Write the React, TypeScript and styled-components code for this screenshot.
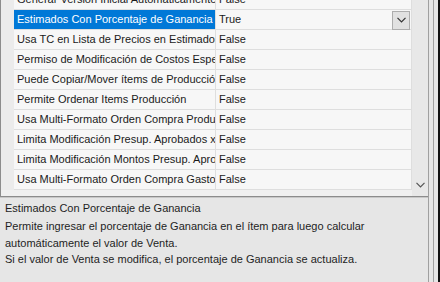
import React from "react";
import styled, { createGlobalStyle } from "styled-components";

const Global = createGlobalStyle`
  html, body { margin: 0; padding: 0; background: #e6e6e6; overflow: hidden; }
  * { box-sizing: border-box; }
`;

const Frame = styled.div`
  width: 440px;
  height: 282px;
  display: flex;
  font-family: "Liberation Sans", Arial, sans-serif;
  font-size: 11px;
  color: #1e1e1e;
  background: #e6e6e6;
`;

const Main = styled.div`
  width: 429px;
  display: flex;
  flex-direction: column;
  border-right: 1px solid #a0a0a0;
`;

const Grid = styled.div`
  height: 197px;
  display: flex;
  border-left: 1px solid #8c8c8c;
  border-bottom: 1px solid #8c8c8c;
  background: #f0f0f0;
`;

const Viewport = styled.div`
  flex: 1;
  overflow: hidden;
  display: flex;
  flex-direction: column;
`;

const Rows = styled.div`
  margin-top: -10px;
  display: flex;
  flex-direction: column;
`;

const Row = styled.div`
  height: 20px;
  display: grid;
  grid-template-columns: 13px 202px 1fr;
  background: #f0f0f0;
`;

const Gutter = styled.div`
  background: #ebebeb;
`;

const NameCell = styled.div<{ $selected?: boolean }>`
  padding-left: 3px;
  line-height: 19px;
  white-space: nowrap;
  overflow: hidden;
  text-overflow: clip;
  border-bottom: 1px solid #dedede;
  border-right: 1px solid #dedede;
  background: ${(p) => (p.$selected ? "#0078d7" : "#f7f7f7")};
  color: ${(p) => (p.$selected ? "#ffffff" : "#1a1a1a")};
`;

const ValueCell = styled.div`
  display: flex;
  align-items: center;
  justify-content: space-between;
  padding-left: 3px;
  padding-right: 1px;
  height: 20px;
  border-bottom: 1px solid #dedede;
  background: #f7f7f7;
  border-right: 1px solid #dedede;
  color: #1a1a1a;
`;

const ValueText = styled.span`
  line-height: 19px;
`;

const DropButton = styled.div`
  width: 18px;
  height: 19px;
  margin-top: 1px;
  border: 1px solid #adadad;
  background: #e1e1e1;
  display: flex;
  align-items: center;
  justify-content: center;
`;

const ScrollBar = styled.div`
  width: 16px;
  background: #e8e8e8;
  display: flex;
  flex-direction: column;
  justify-content: flex-end;
  align-items: center;
  padding-bottom: 8px;
`;

const Description = styled.div`
  flex: 1;
  padding: 2px 5px;
  background: #e6e6e6;
  border-top: 1px solid #c8c8c8;
`;

const DescTitle = styled.div`
  line-height: 17px;
  margin-bottom: 1px;
`;

const DescLine = styled.div`
  line-height: 16.5px;
`;

const SideFrame = styled.div`
  flex: 1;
  display: flex;
  justify-content: flex-end;
  background: #e6e6e6;
`;

const SideLine = styled.div`
  width: 1px;
  margin-right: 4px;
  background: #a0a0a0;
`;

const SideEdge = styled.div`
  width: 2px;
  background: #111;
`;

const Chevron = ({ color = "#333" }: { color?: string }) => (
  <svg width="9" height="6" viewBox="0 0 9 6">
    <path d="M0.5 0.8 L4.5 4.8 L8.5 0.8" fill="none" stroke={color} strokeWidth="1.2" />
  </svg>
);

const rows: { name: string; value: string; selected?: boolean }[] = [
  { name: "Generar Versión Inicial Automáticamente", value: "False" },
  { name: "Estimados Con Porcentaje de Ganancia", value: "True", selected: true },
  { name: "Usa TC en Lista de Precios en Estimados", value: "False" },
  { name: "Permiso de Modificación de Costos Especiales", value: "False" },
  { name: "Puede Copiar/Mover ítems de Producción", value: "False" },
  { name: "Permite Ordenar Items Producción", value: "False" },
  { name: "Usa Multi-Formato Orden Compra Producción", value: "False" },
  { name: "Limita Modificación Presup. Aprobados x Usuario", value: "False" },
  { name: "Limita Modificación Montos Presup. Aprobados", value: "False" },
  { name: "Usa Multi-Formato Orden Compra Gastos", value: "False" },
];

export default function App() {
  return (
    <>
      <Global />
      <Frame>
        <Main>
          <Grid>
            <Viewport>
              <Rows>
                {rows.map((r) => (
                  <Row key={r.name}>
                    <Gutter />
                    <NameCell $selected={r.selected}>{r.name}</NameCell>
                    <ValueCell>
                      <ValueText>{r.value}</ValueText>
                      {r.selected && (
                        <DropButton>
                          <Chevron />
                        </DropButton>
                      )}
                    </ValueCell>
                  </Row>
                ))}
              </Rows>
            </Viewport>
            <ScrollBar>
              <Chevron color="#555" />
            </ScrollBar>
          </Grid>
          <Description>
            <DescTitle>Estimados Con Porcentaje de Ganancia</DescTitle>
            <DescLine>Permite ingresar el porcentaje de Ganancia en el ítem para luego calcular</DescLine>
            <DescLine>automáticamente el valor de Venta.</DescLine>
            <DescLine>Si el valor de Venta se modifica, el porcentaje de Ganancia se actualiza.</DescLine>
          </Description>
        </Main>
        <SideFrame>
          <SideLine />
          <SideEdge />
        </SideFrame>
      </Frame>
    </>
  );
}
